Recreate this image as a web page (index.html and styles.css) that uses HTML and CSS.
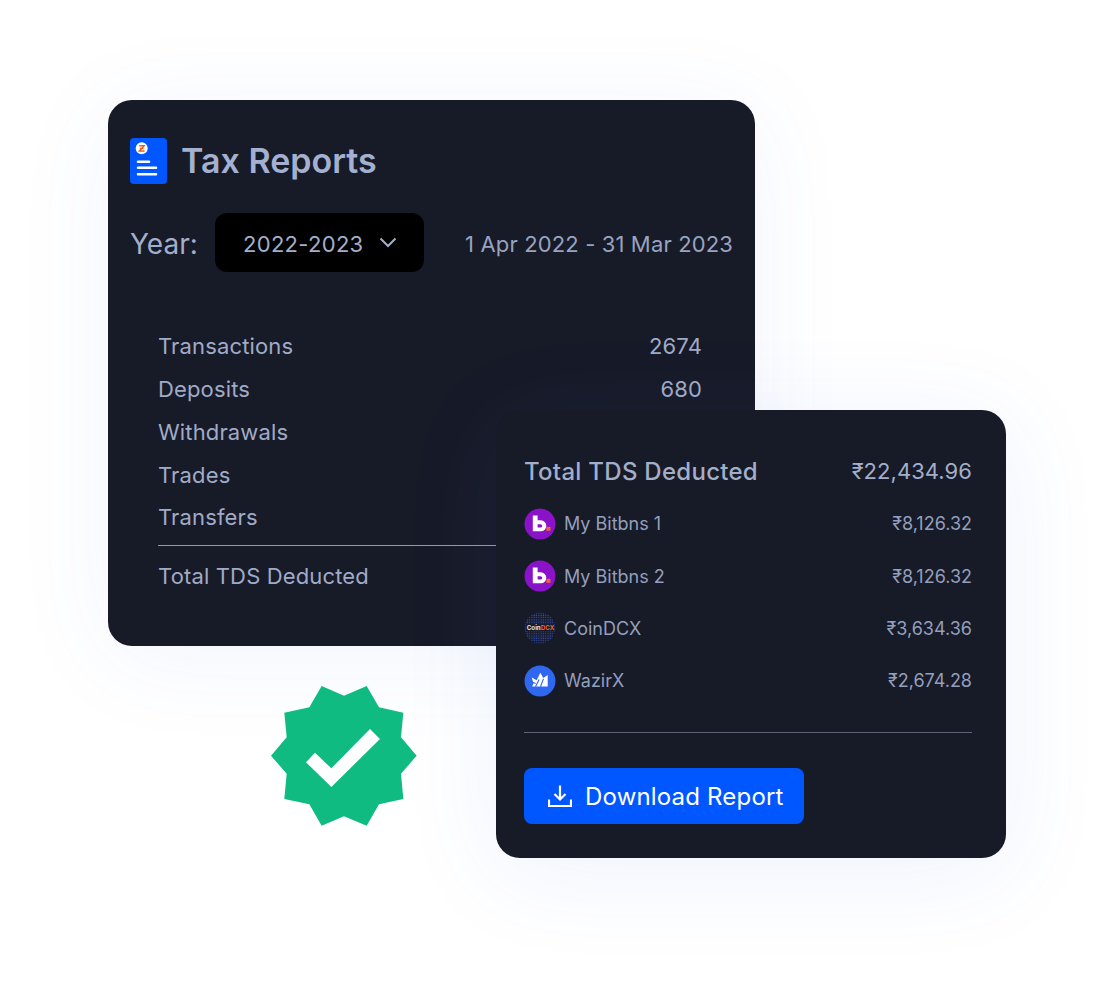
FILE: index.html
```html
<!DOCTYPE html>
<html lang="en">
<head>
<meta charset="utf-8">
<title>Tax Reports</title>
<link rel="stylesheet" href="styles.css">
</head>
<body>
<main class="stage">
  <section class="card report">
    <header class="report-head">
      <svg class="doc-icon" viewBox="0 0 38 46" aria-hidden="true">
        <rect width="37" height="46" rx="4" fill="#0057ff"/>
        <circle cx="11.700" cy="10.300" r="6" fill="#fff"/>
        <path d="M9.200 7.800h5l-4.800 5.200h5.200M9.800 10.400h3.800" fill="none" stroke="#ec5f1e" stroke-width="1.400"/>
        <path d="M8 23.700h11M8 29.700h18M8 36.300h18" stroke="#fff" stroke-width="2.600" stroke-linecap="round"/>
      </svg>
      <h1>Tax Reports</h1>
    </header>
    <div class="year-row">
      <span class="year-label">Year:</span>
      <div class="year-select">
        <span class="year-value">2022-2023</span>
        <svg class="chev" viewBox="0 0 18 11" aria-hidden="true"><path d="M1.500 1.500 9 9l7.500-7.500" fill="none" stroke="currentColor" stroke-width="2"/></svg>
      </div>
      <span class="year-range">1 Apr 2022 - 31 Mar 2023</span>
    </div>
    <dl class="stats">
      <div class="stat"><dt>Transactions</dt><dd>2674</dd></div>
      <div class="stat"><dt>Deposits</dt><dd>680</dd></div>
      <div class="stat"><dt>Withdrawals</dt><dd></dd></div>
      <div class="stat"><dt>Trades</dt><dd></dd></div>
      <div class="stat"><dt>Transfers</dt><dd></dd></div>
      <div class="stat total"><dt>Total TDS Deducted</dt><dd></dd></div>
    </dl>
  </section>

  <svg class="badge" viewBox="0 0 510 480" aria-hidden="true">
    <polygon fill="#10bb82" points="185,33 252,62 320,33 357,97 430,113 423,187 470,242 423,296 430,372 357,388 320,452 252,424 185,452 148,388 73,372 80,296 33,242 80,187 73,113 148,97"/>
    <polygon fill="#fff" points="330,162 360,192 214,336 138,262 165,233 214,280"/>
  </svg>

  <section class="card tds">
    <div class="tds-head"><h2>Total TDS Deducted</h2><span>₹22,434.96</span></div>
    <ul class="ex-list">
      <li class="ex">
        <svg class="ex-logo" viewBox="0 0 32 32" aria-hidden="true">
          <circle cx="16" cy="16" r="15.500" fill="#8a12c9"/>
          <path fill="#fff" fill-rule="evenodd" d="M8.800 7.500h4.800v4.800h3.200a5.500 5.500 0 0 1 0 11H8.800zM13.600 16.200v3.400h2.900a1.700 1.700 0 0 0 0-3.400z"/>
          <rect x="22.400" y="18.800" width="4" height="4" fill="#f0662a"/>
        </svg>
        <span class="ex-name">My Bitbns 1</span><span class="ex-val">₹8,126.32</span>
      </li>
      <li class="ex">
        <svg class="ex-logo" viewBox="0 0 32 32" aria-hidden="true">
          <circle cx="16" cy="16" r="15.500" fill="#8a12c9"/>
          <path fill="#fff" fill-rule="evenodd" d="M8.800 7.500h4.800v4.800h3.200a5.500 5.500 0 0 1 0 11H8.800zM13.600 16.200v3.400h2.900a1.700 1.700 0 0 0 0-3.400z"/>
          <rect x="22.400" y="18.800" width="4" height="4" fill="#f0662a"/>
        </svg>
        <span class="ex-name">My Bitbns 2</span><span class="ex-val">₹8,126.32</span>
      </li>
      <li class="ex">
        <svg class="ex-logo" viewBox="0 0 32 32" aria-hidden="true">
          <defs>
            <pattern id="dots" width="2.300" height="2.300" patternUnits="userSpaceOnUse"><circle cx="1" cy="1" r=".6" fill="#3f5cc4"/></pattern>
          </defs>
          <circle cx="16" cy="16" r="15.500" fill="#171c30"/>
          <circle cx="16" cy="16" r="15.500" fill="url(#dots)"/>
          <rect x="2" y="12" width="28" height="7.500" fill="#171c30"/>
          <text class="cdcx" x="2.800" y="18"><tspan fill="#e4e6ec">Coin</tspan><tspan fill="#ec6a22">DCX</tspan></text>
        </svg>
        <span class="ex-name">CoinDCX</span><span class="ex-val">₹3,634.36</span>
      </li>
      <li class="ex">
        <svg class="ex-logo" viewBox="0 0 32 32" aria-hidden="true">
          <circle cx="16" cy="16" r="15.500" fill="#3067f0"/>
          <path fill="#fff" d="M7.700 12.500l5 2.800 3.600-7.500 3 5.200 4.400-3v11.500H8.200l1.300-3.200z"/>
          <path fill="none" stroke="#3067f0" stroke-width="1.100" d="M11.500 21.800l3.600-7.200M16.500 21.800l3-8M7.700 17l4 1.500"/>
        </svg>
        <span class="ex-name">WazirX</span><span class="ex-val">₹2,674.28</span>
      </li>
    </ul>
    <hr class="rule">
    <button class="download" type="button">
      <svg viewBox="0 0 24 24" aria-hidden="true"><path d="M12 1.500V15M6.500 10l5.500 5.500 5.500-5.500M1 15.500V22h22v-6.500" fill="none" stroke="currentColor" stroke-width="2.200"/></svg>
      Download Report
    </button>
  </section>
</main>
</body>
</html>
```

FILE: styles.css
```css
* { box-sizing: border-box; }
html, body { margin: 0; background: #fff; }
body { font-family: Inter, "Noto Sans", sans-serif; color: #a3aeca; overflow: hidden; }
.stage { position: relative; width: 1118px; height: 984px; padding: 100px 0 0 108px; }
.card { background: #171a27; box-shadow: 0 12px 100px rgba(70, 110, 230, .07); }
h1, h2, dl, dd, ul { margin: 0; padding: 0; }

.report { width: 647px; height: 546px; border-radius: 24px; padding: 38px 22px 0 22px; }
.report-head { display: flex; align-items: center; gap: 13px; height: 46px; }
.doc-icon { width: 38px; height: 46px; }
h1 { font-size: 34px; font-weight: 600; color: #a3b0d0; line-height: 46px; }

.year-row { display: flex; align-items: center; margin-top: 29px; height: 59px; }
.year-label { font-size: 28px; width: 85px; padding-top: 2px; color: #a3aeca; }
.year-select { display: flex; align-items: center; gap: 15px; width: 209px; height: 59px; padding-left: 28px; background: #000; border-radius: 12px; font-size: 22px; letter-spacing: .3px; color: #a3aeca; }
.year-value { padding-top: 2px; }
.chev { width: 18px; height: 11px; }
.year-range { margin-left: auto; padding-top: 2px; font-size: 22px; color: #98a3c0; letter-spacing: .14px; }

.stats { margin: 53px 31px 0 28px; font-size: 22px; letter-spacing: .15px; }
.stat { display: flex; justify-content: space-between; height: 42.750px; align-items: center; color: #a0abc8; }
.stat dd { color: #a0abc8; }
.stat.total { height: 62px; margin-top: 6px; border-top: 1px solid #8f99b5; }

.badge { position: absolute; left: 260px; top: 675px; width: 170px; height: 160px; }

.tds { position: absolute; left: 496px; top: 410px; width: 510px; height: 448px; border-radius: 24px; padding: 43px 34px 0 28px; box-shadow: 0 14px 100px rgba(70, 110, 230, .09); }
.tds-head { display: flex; justify-content: space-between; align-items: center; height: 36px; font-size: 22px; letter-spacing: .05px; }
.tds-head h2 { font-size: 24px; font-weight: 500; letter-spacing: .28px; color: #a3aeca; }
.tds-head span { color: #a3aeca; }
.ex-list { list-style: none; margin-top: 8.500px; }
.ex { display: flex; align-items: center; height: 52.400px; font-size: 18px; }
.ex-logo { width: 32px; height: 32px; margin-right: 8px; flex: none; }
.cdcx { font: 700 6.200px Inter, sans-serif; }
.ex-name { flex: 1; color: #949fbc; }
.ex-val { color: #949fbc; }
.rule { border: 0; border-top: 1px solid #5c6378; margin: 25px 0 0; }
.download { display: flex; align-items: center; gap: 13px; margin-top: 35px; width: 280px; height: 56px; padding: 0 0 0 24px; background: #0057ff; color: #fff; border: 0; border-radius: 8px; font: 400 24px Inter, sans-serif; letter-spacing: .18px; }
.download svg { width: 24px; height: 24px; }
```
